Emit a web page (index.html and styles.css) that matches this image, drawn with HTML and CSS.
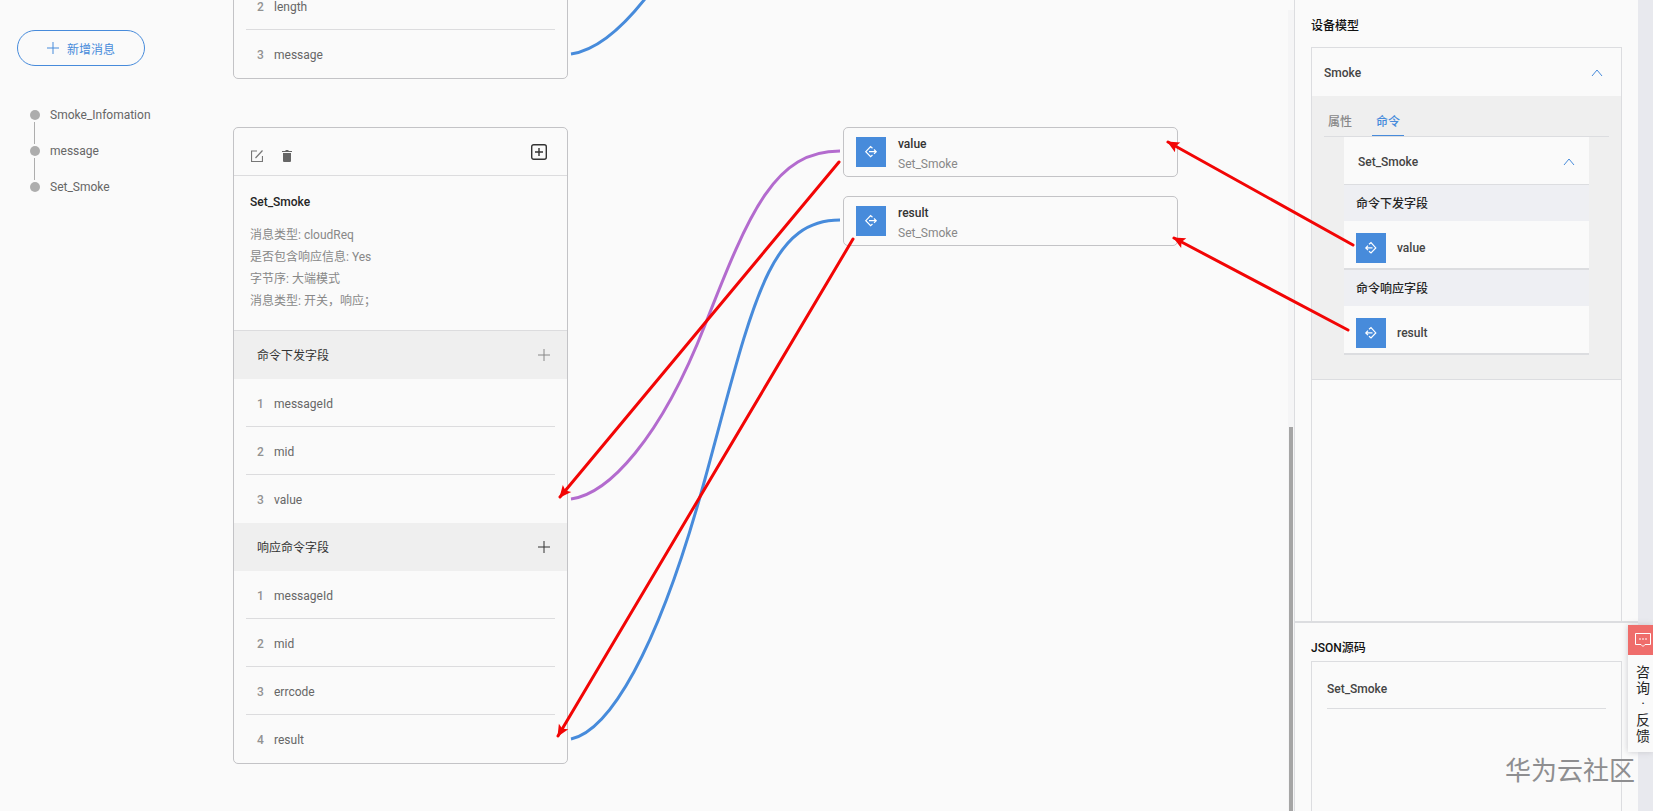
FILE: index.html
```html
<!DOCTYPE html>
<html lang="zh-CN">
<head>
<meta charset="UTF-8" />
<meta name="viewport" content="width=device-width, initial-scale=1" />
<title>编解码插件开发</title>
<link rel="stylesheet" href="styles.css">
</head>
<body>
  <svg width="0" height="0" class="defs">
    <symbol id="icon-plus" viewBox="0 0 12 12"><path d="M6 0v12M0 6h12" fill="none" stroke="currentColor" /></symbol>
    <symbol id="icon-up" viewBox="0 0 12 8"><path d="M1 7l5-6 5 6" fill="none" stroke="currentColor" /></symbol>
    <symbol id="icon-out" viewBox="0 0 30 30">
      <path d="M16.500 11.200L14.600 9.600L9.800 14.700L14.600 19.600L16.500 18M13 14.700H20M18 12.500L20.200 14.700L18 16.900" fill="none" stroke="currentColor" stroke-width="1.200" />
    </symbol>
    <symbol id="icon-in" viewBox="0 0 30 30">
      <path d="M13 11.200L15 9.600L19.800 14.900L15 20L13 18.300M16.500 14.900H10M12 12.700L9.800 14.900L12 17.100" fill="none" stroke="currentColor" stroke-width="1.200" />
    </symbol>
  </svg>

  <aside class="sidebar">
    <button class="add-button"><svg class="plus"><use href="#icon-plus" /></svg><span>新增消息</span></button>
    <ul class="steps">
      <li><a href="#smoke-information">Smoke_Infomation</a></li>
      <li><a href="#message">message</a></li>
      <li><a href="#set-smoke">Set_Smoke</a></li>
    </ul>
  </aside>

  <main class="canvas">
    <div class="messages">
      <section class="card card-cut" id="message">
        <ol class="fields">
          <li><span class="num">2</span>length</li>
          <li><span class="num">3</span>message</li>
        </ol>
      </section>

      <section class="card" id="set-smoke">
        <header class="card-tools">
          <div class="tools-left">
            <button class="icon-button" aria-label="编辑">
              <svg width="12" height="12" viewBox="0 0 12 12" fill="none" stroke="#777"><path d="M6 1H.500V11.500H11.500V6M4.500 8L11.500 .500" stroke-width="1.200" /></svg>
            </button>
            <button class="icon-button" aria-label="删除">
              <svg width="12" height="12" viewBox="0 0 12 12" fill="#666"><path d="M1 1h3l1-1h2l1 1h3v1H1zM2 3h8v8q0 1-1 1H3q-1 0-1-1z" /></svg>
            </button>
          </div>
          <button class="icon-button" aria-label="添加">
            <svg width="16" height="16" viewBox="0 0 16 16" fill="none" stroke="#333"><rect x=".7" y=".7" width="14.600" height="14.600" rx="2" stroke-width="1.400" /><path d="M8 4v8M4 8h8" stroke-width="1.400" /></svg>
          </button>
        </header>
        <div class="info">
          <h2>Set_Smoke</h2>
          <p>消息类型: cloudReq</p>
          <p>是否包含响应信息: Yes</p>
          <p>字节序: 大端模式</p>
          <p>消息类型: 开关，响应；</p>
        </div>
        <div class="group-title first">
          <h3>命令下发字段</h3>
          <button class="icon-button muted" aria-label="添加字段"><svg class="plus"><use href="#icon-plus" /></svg></button>
        </div>
        <ol class="fields">
          <li><span class="num">1</span>messageId</li>
          <li><span class="num">2</span>mid</li>
          <li><span class="num">3</span>value</li>
        </ol>
        <div class="group-title">
          <h3>响应命令字段</h3>
          <button class="icon-button" aria-label="添加字段"><svg class="plus"><use href="#icon-plus" /></svg></button>
        </div>
        <ol class="fields">
          <li><span class="num">1</span>messageId</li>
          <li><span class="num">2</span>mid</li>
          <li><span class="num">3</span>errcode</li>
          <li><span class="num">4</span>result</li>
        </ol>
      </section>
    </div>

    <div class="props">
      <div class="prop">
        <svg class="prop-icon"><use href="#icon-out" /></svg>
        <div class="prop-text"><strong>value</strong><span>Set_Smoke</span></div>
      </div>
      <div class="prop">
        <svg class="prop-icon"><use href="#icon-out" /></svg>
        <div class="prop-text"><strong>result</strong><span>Set_Smoke</span></div>
      </div>
    </div>
  </main>

  <div class="rail"><div class="thumb"></div></div>

  <aside class="panel">
    <section class="model">
      <h2 class="panel-title">设备模型</h2>
      <div class="box">
        <button class="fold">Smoke<svg class="chevron"><use href="#icon-up" /></svg></button>
        <div class="service">
          <nav class="tabs">
            <button>属性</button>
            <button class="active">命令</button>
          </nav>
          <div class="command">
            <button class="fold">Set_Smoke<svg class="chevron"><use href="#icon-up" /></svg></button>
            <h4>命令下发字段</h4>
            <div class="param"><svg class="prop-icon"><use href="#icon-in" /></svg>value</div>
            <h4>命令响应字段</h4>
            <div class="param"><svg class="prop-icon"><use href="#icon-in" /></svg>result</div>
          </div>
        </div>
      </div>
    </section>
    <section class="json">
      <h2 class="panel-title">JSON源码</h2>
      <div class="box">
        <div class="json-item">Set_Smoke</div>
      </div>
    </section>
  </aside>

  <svg class="links" fill="none">
    <defs>
      <marker id="head" markerUnits="userSpaceOnUse" markerWidth="14" markerHeight="12" refX="12" refY="6" orient="auto">
        <path d="M13 6L1 .500L3.500 6L1 11.500z" fill="#f20505" />
      </marker>
    </defs>
    <g stroke-width="3">
      <path stroke="#478bdb" d="M571 54C592 51 618 34 648 -5" />
      <path stroke="#b36bce" d="M571 499C608 494 660 440 705 325S775 151 840 151" />
      <path stroke="#478bdb" d="M571 739C608 731 657 655 705 479S768 220 840 220" />
    </g>
    <g stroke="#f20505" stroke-width="3" stroke-linecap="round">
      <path d="M839 162L560 497" marker-end="url(#head)" />
      <path d="M853 239L558 736" marker-end="url(#head)" />
      <path d="M1353 245L1168 142" marker-end="url(#head)" />
      <path d="M1348 330L1174 238" marker-end="url(#head)" />
    </g>
  </svg>

  <div class="watermark">华为云社区</div>
  <a class="feedback" href="#feedback">
    <span class="feedback-icon">
      <svg width="16" height="14" viewBox="0 0 16 14" fill="none" stroke="#fff"><path d="M.500 .500h15v11H10l-2 2-2-2H.500z" /><path d="M4 6h2M7 6h2M10 6h2" /></svg>
    </span>
    <span class="feedback-text">咨询·反馈</span>
  </a>
</body>
</html>
```
FILE: styles.css
```css
* {
  box-sizing: border-box;
}
body {
  margin: 0;
  height: 100vh;
  display: flex;
  position: relative;
  overflow: hidden;
  background: #fafafa;
  color: #666;
  font-family: Roboto, "Noto Sans CJK SC", sans-serif;
  font-size: 12px;
  line-height: 22px;
}
h2, h3, h4, p, ul, ol {
  margin: 0;
  padding: 0;
  font-size: 12px;
  list-style: none;
}
button {
  font: inherit;
  color: inherit;
  background: none;
  border: none;
  padding: 0;
  cursor: pointer;
}
a {
  color: inherit;
  text-decoration: none;
}
svg {
  display: block;
}
.defs {
  position: absolute;
}
.plus {
  width: 12px;
  height: 12px;
}

/* left */
.sidebar {
  width: 233px;
  flex: none;
  padding: 30px 17px;
}
.add-button {
  display: flex;
  align-items: center;
  justify-content: center;
  gap: 8px;
  width: 128px;
  height: 36px;
  border: 1px solid #478bdb;
  border-radius: 18px;
  color: #478bdb;
}
.add-button span {
  padding-top: 3px;
}
.steps {
  margin: 31px 0 0 13px;
}
.steps li {
  position: relative;
  height: 36px;
  line-height: 36px;
}
.steps a {
  display: flex;
  align-items: center;
  gap: 10px;
}
.steps a::before {
  content: "";
  width: 10px;
  height: 10px;
  border-radius: 50%;
  background: #adadad;
}
.steps li + li::before {
  content: "";
  position: absolute;
  left: 4px;
  top: -11px;
  height: 22px;
  border-left: 1px solid #adadad;
}

/* canvas */
.canvas {
  flex: 1;
  display: flex;
  gap: 275px;
  min-width: 0;
}
.messages {
  flex: none;
  width: 335px;
}
.card {
  border: 1px solid #c3c3c6;
  border-radius: 5px;
  margin-bottom: 48px;
}
.card-cut {
  margin-top: -19px;
}
.card-tools {
  display: flex;
  align-items: center;
  justify-content: space-between;
  height: 48px;
  padding: 0 20px 0 17px;
  border-bottom: 1px solid #dcdcde;
}
.tools-left {
  display: flex;
  gap: 18px;
  padding-top: 8px;
}
.info {
  padding: 15px 16px 18px;
  color: #888;
}
.info h2 {
  margin-bottom: 11px;
  color: #252525;
  font-weight: 500;
}
.group-title {
  display: flex;
  align-items: center;
  justify-content: space-between;
  height: 48px;
  padding: 0 17px 0 23px;
  background: #efefef;
  color: #333;
}
.group-title.first {
  height: 49px;
  border-top: 1px solid #dcdcde;
}
.group-title h3 {
  font-weight: 400;
  padding-top: 2px;
}
.muted {
  color: #888;
}
.fields {
  padding: 0 12px;
}
.fields li {
  height: 48px;
  line-height: 50px;
  padding-left: 11px;
  border-bottom: 1px solid #dcdcde;
}
.fields li:last-child {
  border-bottom: none;
}
.num {
  display: inline-block;
  width: 17px;
  color: #929292;
  font-weight: 500;
}
.props {
  flex: none;
  width: 335px;
  padding-top: 127px;
}
.prop {
  display: flex;
  align-items: center;
  gap: 12px;
  height: 50px;
  margin-bottom: 19px;
  padding-left: 12px;
  border: 1px solid #c3c3c6;
  border-radius: 5px;
  line-height: 20px;
}
.prop-text {
  padding-top: 3px;
}
.prop strong {
  display: block;
  color: #333;
  font-weight: 500;
}
.prop span {
  color: #888;
}
.prop-icon {
  width: 30px;
  height: 30px;
  background: #478bdb;
  color: #fff;
}
.rail {
  display: flex;
  width: 6px;
  margin-top: 10px;
  align-items: flex-end;
  justify-content: center;
  background: #f5f5f6;
}
.thumb {
  width: 4px;
  height: 48%;
  background: #a5a5a5;
}

/* right */
.panel {
  display: flex;
  flex-direction: column;
  flex: none;
  width: 359px;
  border-left: 1px solid #dcdde0;
  border-right: 15px solid #e8e9ee;
}
.model, .json {
  display: flex;
  flex-direction: column;
  padding: 0 16px;
}
.model {
  flex: 1;
  padding-top: 15px;
}
.json {
  flex: none;
  height: 190px;
  padding-top: 14px;
  border-top: 2px solid #dcdde0;
}
.panel-title {
  color: #111;
  font-weight: 500;
}
.box {
  flex: 1;
  border: 1px solid #dcdde0;
  border-bottom: none;
  color: #444;
  font-weight: 500;
}
.model .box {
  margin-top: 10px;
}
.json .box {
  margin-top: 2px;
}
.fold {
  display: flex;
  align-items: center;
  justify-content: space-between;
  width: 100%;
  height: 48px;
  padding: 2px 18px 0 12px;
  font-weight: 500;
}
.chevron {
  width: 12px;
  height: 8px;
  color: #478bdb;
}
.service {
  padding: 16px 12px 24px;
  background: #efefef;
  border-bottom: 1px solid #dcdde0;
}
.tabs {
  display: flex;
  gap: 20px;
  border-bottom: 1px solid #dcdde0;
  color: #888;
}
.tabs button {
  height: 24px;
  line-height: 18px;
  padding: 0 0 4px 4px;
  font-weight: 500;
}
.tabs .active {
  padding-right: 4px;
  color: #478bdb;
  border-bottom: 1px solid #478bdb;
}
.command {
  margin: 0 20px;
  background: #fafafa;
}
.command .fold {
  padding: 2px 14px 0;
  border-bottom: 1px solid #dcdde0;
}
.command h4 {
  height: 36px;
  line-height: 38px;
  padding-left: 12px;
  background: #eeeff3;
  color: #252525;
  font-weight: 500;
}
.param {
  display: flex;
  align-items: center;
  gap: 11px;
  height: 49px;
  padding: 6px 12px 0;
  border-bottom: 2px solid #dcdde0;
}
.json-item {
  height: 47px;
  line-height: 54px;
  margin: 0 15px;
  border-bottom: 1px solid #dcdde0;
}

/* overlays */
.links {
  position: absolute;
  top: 0;
  left: 0;
  width: 100%;
  height: 100%;
  pointer-events: none;
}
.watermark {
  position: absolute;
  right: 18px;
  bottom: 20px;
  font-size: 26px;
  line-height: 40px;
  color: #8e8e90;
}
.feedback {
  position: absolute;
  right: 0;
  bottom: 59px;
  width: 25px;
  background: #fafafa;
  box-shadow: 0 0 6px #c8c8cc;
}
.feedback-icon {
  display: flex;
  align-items: center;
  justify-content: center;
  height: 30px;
  padding-left: 5px;
  background: #ef6d6b;
}
.feedback-text {
  display: block;
  width: 14px;
  margin-left: 8px;
  padding: 9px 0 8px;
  font-size: 14px;
  line-height: 16px;
  text-align: center;
  word-break: break-all;
  color: #252525;
}
```
